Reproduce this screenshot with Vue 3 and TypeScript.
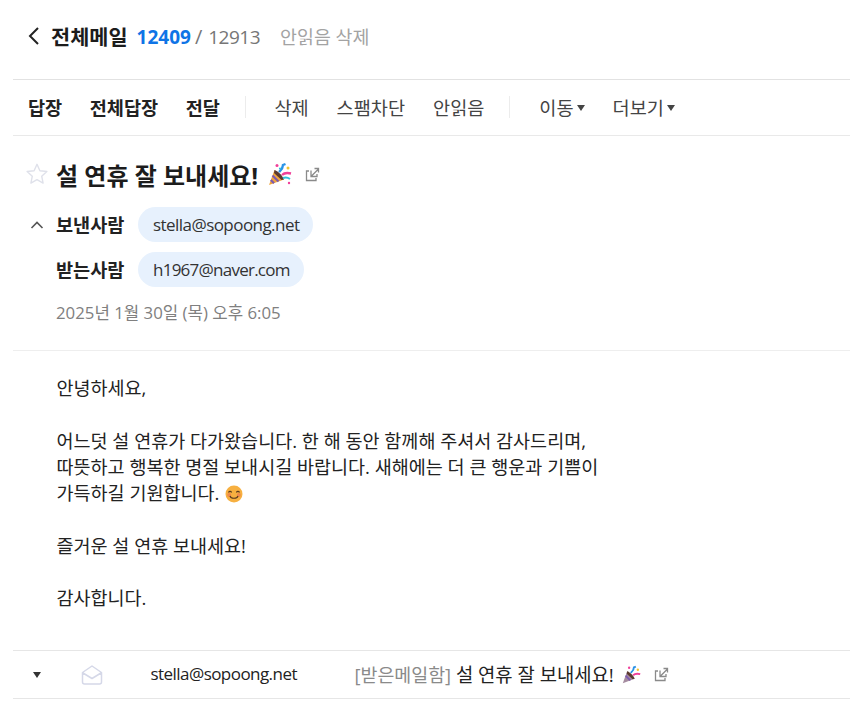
<template>
  <div class="mail-view">
    <header class="list-head">
      <svg class="back" width="14" height="20" viewBox="0 0 14 20" aria-hidden="true">
        <path d="M11 2 3 10l8 8" fill="none" stroke="#222" stroke-width="2" />
      </svg>
      <strong class="folder">전체메일</strong>
      <span class="counts"><b>{{ unread }}</b><span class="slash">/</span><span class="total">{{ total }}</span></span>
      <button class="clear-unread">안읽음 삭제</button>
    </header>

    <nav class="toolbar">
      <button v-for="a in primaryActions" :key="a" class="tool strong">{{ a }}</button>
      <i class="sep first" />
      <button v-for="a in secondaryActions" :key="a" class="tool">{{ a }}</button>
      <i class="sep second" />
      <button v-for="a in menuActions" :key="a" class="tool menu">{{ a }}<i class="caret" /></button>
    </nav>

    <section class="mail-head">
      <h1 class="subject">
        <svg class="star" width="24" height="24" viewBox="0 0 24 24" aria-hidden="true">
          <path d="M12 2.300l2.900 6.400 7 .8-5.200 4.700 1.400 6.900-6.100-3.500-6.100 3.500 1.400-6.900-5.200-4.700 7-.8z" fill="none" stroke="#dfe1ea" stroke-width="1.400" stroke-linejoin="round" />
        </svg>
        <span>설 연휴 잘 보내세요!</span>
        <svg class="party" width="24" height="24" viewBox="0 0 24 24" aria-hidden="true">
          <path d="M1 23 6.500 8 16 17.500z" fill="#f0a63c" />
          <path d="M4.500 13.500 10.500 19.500M2.800 18l3.200 3.200" stroke="#7c5bb0" stroke-width="2.200" />
          <path d="M6.500 8c3 .5 8 5.500 9.500 9.500l-2.500.5L6 11z" fill="#5b3a30" />
          <path d="M11 10c2-2 4-3.500 4-7l2.500-1" stroke="#2a93e6" stroke-width="2.400" fill="none" />
          <path d="M14 13c2.500-2.500 5-2.500 9-1.500" stroke="#f0409a" stroke-width="2.400" fill="none" />
          <path d="M15 16c2.500-1 5-.5 7 1" stroke="#2fc0dc" stroke-width="2" fill="none" />
          <circle cx="9" cy="3.500" r="1.500" fill="#f0409a" /><circle cx="20" cy="6" r="1.500" fill="#f4c430" /><circle cx="12" cy="6.500" r="1.100" fill="#2fc0dc" /><circle cx="21" cy="21" r="1.200" fill="#f0409a" />
        </svg>
        <svg class="popout" width="15" height="15" viewBox="0 0 15 15" aria-hidden="true">
          <path d="M4 4H1.500v9.500H11V11M6 3.500v6h6V7M6.500 9 13 2.500M9.500 1.500h4v4" fill="none" stroke="#8a8a8a" stroke-width="1.300" />
        </svg>
      </h1>

      <div class="people">
        <svg class="fold" width="14" height="14" viewBox="0 0 14 14" aria-hidden="true">
          <path d="M1.500 10 7 4.500l5.500 5.500" fill="none" stroke="#555" stroke-width="1.600" />
        </svg>
        <span class="who">보낸사람</span>
        <span class="chip">stella@sopoong.net</span>
      </div>
      <div class="people">
        <span class="who">받는사람</span>
        <span class="chip to">h1967@naver.com</span>
      </div>
      <p class="date">2025년 1월 30일 (목) 오후 6:05</p>
    </section>

    <article class="mail-body">
      <p>안녕하세요,</p>
      <p>어느덧 설 연휴가 다가왔습니다. 한 해 동안 함께해 주셔서 감사드리며,<br />따뜻하고 행복한 명절 보내시길 바랍니다. 새해에는 더 큰 행운과 기쁨이<br />가득하길 기원합니다.
        <svg class="smile" width="18" height="18" viewBox="0 0 18 18" aria-hidden="true">
          <circle cx="9" cy="9" r="8.500" fill="#f7b040" />
          <circle cx="4.200" cy="10" r="2" fill="#f08a4b" /><circle cx="13.800" cy="10" r="2" fill="#f08a4b" />
          <path d="M3.500 7.500c.6-1.500 2.500-1.500 3.100 0M11.400 7.500c.6-1.500 2.500-1.500 3.100 0M5 11c1 3 7 3 8 0" fill="none" stroke="#5a3a1e" stroke-width="1.100" />
        </svg>
      </p>
      <p>즐거운 설 연휴 보내세요!</p>
      <p>감사합니다.</p>
    </article>

    <div class="next-row">
      <i class="row-caret" />
      <svg class="envelope" width="22" height="22" viewBox="0 0 22 22" aria-hidden="true">
        <path d="M1.500 8.500 11 2l9.500 6.500V18a2 2 0 0 1-2 2h-15a2 2 0 0 1-2-2zM2 9l9 5.500L20 9" fill="none" stroke="#d5d8e8" stroke-width="1.500" stroke-linejoin="round" />
      </svg>
      <span class="sender">stella@sopoong.net</span>
      <span class="row-subject"><em>[받은메일함]</em> <span class="row-title">설 연휴 잘 보내세요!</span></span>
      <svg class="party small" width="19" height="19" viewBox="0 0 24 24" aria-hidden="true">
        <path d="M1 23 6.500 8 16 17.500z" fill="#a58ca0" />
        <path d="M4.500 13.500 10.500 19.500" stroke="#7c5bb0" stroke-width="2.200" />
        <path d="M6.500 8c3 .5 8 5.500 9.500 9.500l-2.500.5L6 11z" fill="#5b3a30" />
        <path d="M11 10c2-2 4-3.500 4-7l2.500-1" stroke="#2a93e6" stroke-width="2.400" fill="none" />
        <path d="M14 13c2.500-2.500 5-2.500 9-1.500" stroke="#f0409a" stroke-width="2.400" fill="none" />
        <circle cx="9" cy="3.500" r="1.500" fill="#f0409a" /><circle cx="20" cy="6" r="1.500" fill="#f4c430" />
      </svg>
      <svg class="popout" width="15" height="15" viewBox="0 0 15 15" aria-hidden="true">
        <path d="M4 4H1.500v9.500H11V11M6 3.500v6h6V7M6.500 9 13 2.500M9.500 1.500h4v4" fill="none" stroke="#8a8a8a" stroke-width="1.300" />
      </svg>
    </div>
  </div>
</template>

<script setup lang="ts">
const unread = 12409
const total = 12913
const primaryActions = ['답장', '전체답장', '전달']
const secondaryActions = ['삭제', '스팸차단', '안읽음']
const menuActions = ['이동', '더보기']
</script>

<style>
body {
  background: #fff;
}
</style>

<style scoped>
.mail-view {
  position: relative;
  width: 850px;
  height: 708px;
  overflow: hidden;
  padding-left: 13px;
  box-sizing: border-box;
  color: #222;
  font-family: "Open Sans", "Noto Sans CJK KR", sans-serif;
}

button {
  border: 0;
  padding: 0;
  background: none;
  font: inherit;
  color: inherit;
}

.list-head {
  height: 80px;
  box-sizing: border-box;
  display: flex;
  align-items: center;
  padding: 0 0 7px 14px;
  border-bottom: 1px solid #e2e2e2;
}

.back {
  margin-right: 10px;
}

.folder {
  font-size: 20.800px;
  margin-right: 9px;
  color: #1c1c1c;
}

.counts {
  font-size: 19px;
  color: #767676;
}

.counts b {
  color: #0f74e6;
}

.slash {
  margin: 0 6px 0 4px;
  font-size: 20px;
}

.total {
  letter-spacing: -0.500px;
}

.clear-unread {
  margin-left: 20px;
  font-size: 18.400px;
  color: #a3a3a3;
}

.toolbar {
  height: 56px;
  box-sizing: border-box;
  display: flex;
  align-items: center;
  padding: 0 0 2px 15px;
  border-bottom: 1px solid #e9e9e9;
}

.tool {
  font-size: 18.600px;
  margin-right: 28px;
  color: #444;
}

.tool.strong {
  font-weight: 700;
  margin-right: 27.500px;
  color: #222;
}

.tool.menu {
  display: flex;
  align-items: center;
  margin-right: 28px;
}

.caret {
  margin-left: 3px;
  margin-top: 2px;
  border: 4px solid transparent;
  border-top: 6px solid #444;
  border-bottom: 0;
}

.sep {
  width: 1px;
  height: 22px;
  background: #ececec;
}

.sep.first {
  margin: 0 28px 0 -2px;
}

.sep.second {
  margin: 0 29px 0 -3px;
}

.mail-head {
  height: 215px;
  box-sizing: border-box;
  padding-top: 21px;
  border-bottom: 1px solid #eee;
}

.subject {
  display: flex;
  align-items: center;
  height: 34px;
  margin: 0 0 16px 12px;
  font-size: 24px;
  font-weight: 700;
  color: #1c1c1c;
}

.subject span {
  margin-left: 7px;
}

.party {
  margin-left: 10px;
}

.subject .popout {
  margin-left: 13px;
}

.people {
  position: relative;
  display: flex;
  align-items: center;
  height: 35px;
  margin: 0 0 10px 43px;
}

.fold {
  position: absolute;
  left: -26px;
  top: 11px;
}

.who {
  width: 82px;
  margin-top: -2px;
  font-size: 18.600px;
  font-weight: 700;
  color: #222;
}

.chip {
  height: 35px;
  line-height: 35px;
  padding: 0 14px 0 15px;
  border-radius: 18px;
  background: #e7f1fd;
  font-size: 17px;
  letter-spacing: -0.550px;
  color: #333;
}

.chip.to {
  letter-spacing: -0.750px;
}

.date {
  margin: 13px 0 0 43px;
  font-size: 16.800px;
  color: #808080;
}

.mail-body {
  padding: 24px 0 0 43.500px;
  font-size: 18.500px;
  line-height: 26.300px;
  color: #222;
}

.mail-body p {
  margin: 0 0 26.300px;
}

.smile {
  vertical-align: -3px;
  margin-left: 1px;
}

.next-row {
  position: absolute;
  left: 13px;
  top: 650px;
  width: 837px;
  height: 49px;
  box-sizing: border-box;
  display: flex;
  align-items: center;
  border-top: 1px solid #e6e6e6;
  border-bottom: 1px solid #e6e6e6;
  font-size: 18.400px;
}

.row-caret {
  margin-left: 20px;
  border: 4px solid transparent;
  border-top: 6px solid #333;
  border-bottom: 0;
}

.envelope {
  margin-left: 40px;
}

.sender {
  margin: -2px 0 0 47.500px;
  width: 204px;
  font-size: 17px;
  letter-spacing: -0.550px;
}

.row-subject {
  margin-top: -2px;
}

.row-subject em {
  font-style: normal;
  color: #8a8a8a;
}

.row-title {
  font-size: 18.800px;
}

.party.small {
  margin-left: 8px;
}

.next-row .popout {
  margin-left: 13px;
}
</style>
